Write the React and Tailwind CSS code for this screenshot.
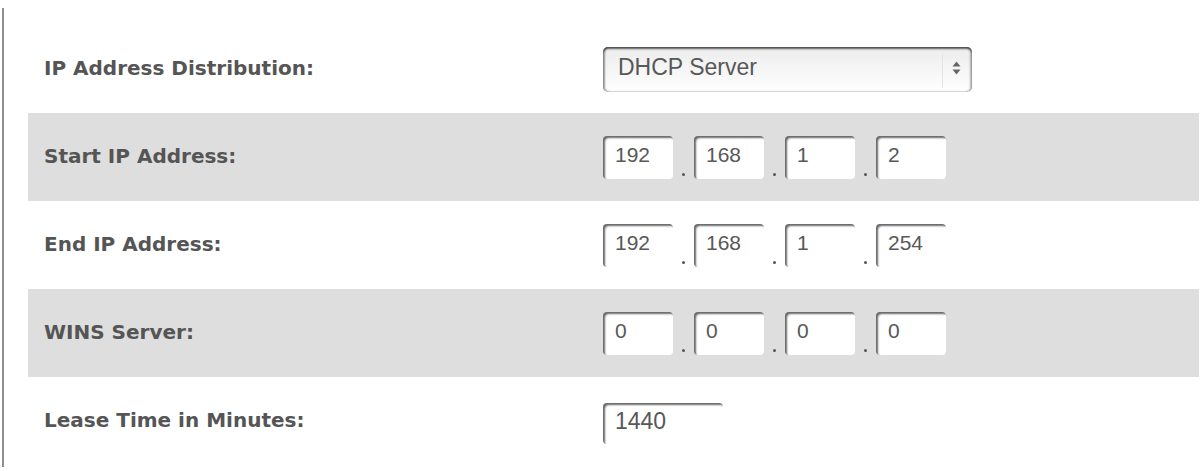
import React from 'react';

const rows = [
  { label: 'IP Address Distribution:', kind: 'select', value: 'DHCP Server' },
  { label: 'Start IP Address:', kind: 'ip', value: ['192', '168', '1', '2'], shaded: true },
  { label: 'End IP Address:', kind: 'ip', value: ['192', '168', '1', '254'] },
  { label: 'WINS Server:', kind: 'ip', value: ['0', '0', '0', '0'], shaded: true },
  { label: 'Lease Time in Minutes:', kind: 'text', value: '1440' },
];

const labelFont = "font-['DejaVu_Sans','Liberation_Sans',sans-serif]";
const inputFont = "font-['Liberation_Sans','Noto_Sans',sans-serif]";

// Inset text field with the dark top/left edge of old Aqua inputs
const Field = ({ value, className = '', textClass = 'text-[21px]' }) => (
  <div
    className={`flex items-center bg-white rounded-[4px] pl-[12px] pb-[4px] text-[#585858] ${textClass} ${inputFont} shadow-[inset_2px_2px_2px_rgba(0,0,0,0.6)] ${className}`}
  >
    {value}
  </div>
);

const Dot = () => (
  <span className="w-[21px] self-stretch flex items-end justify-center pb-[3px]">
    <span className="size-[3px] rounded-full bg-[#555]" />
  </span>
);

const IpInput = ({ parts }) => (
  <div className="flex h-[43px]">
    {parts.map((p, i) => (
      <React.Fragment key={i}>
        {i > 0 && <Dot />}
        <Field value={p} className="w-[70px] h-[43px]" />
      </React.Fragment>
    ))}
  </div>
);

const SelectBox = ({ value }) => (
  <div className="relative flex items-center w-[369px] h-[45px] rounded-[5px] bg-gradient-to-b from-[#ececec] to-white shadow-[inset_0_2px_2px_rgba(0,0,0,0.6),inset_2px_0_2px_rgba(0,0,0,0.35),inset_-2px_0_2px_rgba(0,0,0,0.25)]">
    <span className={`pl-[15px] pb-[4px] text-[23px] text-[#585858] ${inputFont}`}>{value}</span>
    <span className="absolute right-[29px] top-[6px] bottom-[4px] w-px bg-[#e4e4e4]" />
    <svg className="absolute right-[11px] top-[14px]" width="9" height="14" viewBox="0 0 9 14">
      <path d="M4.5 0.5 L8.5 5.5 H0.5 Z" fill="#666" />
      <path d="M4.5 13.5 L8.5 8.5 H0.5 Z" fill="#666" />
    </svg>
  </div>
);

export default function App() {
  return (
    <div className="w-[1204px] h-[471px] flex bg-white overflow-hidden">
      <div className="ml-[2px] mt-[8px] mb-[4px] w-[2px] bg-[#8f8f8f]" />
      <div className="flex-1 pl-[24px] pr-[5px] pt-[25px]">
        {rows.map((row) => (
          <div
            key={row.label}
            className={`flex items-center h-[88px] ${row.shaded ? 'bg-[#dedede]' : ''}`}
          >
            <div
              className={`w-[575px] shrink-0 pl-[16px] pb-[2px] text-[20px] font-bold text-[#555] ${labelFont}`}
            >
              {row.label}
            </div>
            {row.kind === 'select' && <SelectBox value={row.value} />}
            {row.kind === 'ip' && <IpInput parts={row.value} />}
            {row.kind === 'text' && (
              <Field value={row.value} className="w-[120px] h-[41px] mt-[4px]" textClass="text-[23px]" />
            )}
          </div>
        ))}
      </div>
    </div>
  );
}
